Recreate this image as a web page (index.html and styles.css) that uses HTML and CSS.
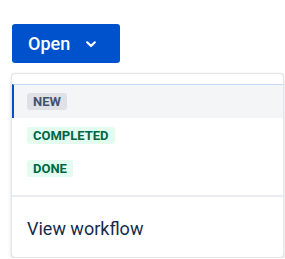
FILE: index.html
```
<!DOCTYPE html>
<html>
	<head>
		<meta charset="utf-8">
		<title>Status</title>
		<link rel="stylesheet" href="styles.css">
	</head>
	<body>
		<button class="status-btn" type="button">
			<span>Open</span>
			<svg class="chevron" width="10" height="7" viewBox="0 0 10 7">
				<path d="M1.2 1.3 L5 5 L8.8 1.3" fill="none" stroke="#fff" stroke-width="2.2" stroke-linecap="round" stroke-linejoin="round"/>
			</svg>
		</button>

		<div class="menu">
			<ul class="menu-list">
				<li class="menu-item selected"><span class="lozenge grey">New</span></li>
				<li class="menu-item"><span class="lozenge green">Completed</span></li>
				<li class="menu-item"><span class="lozenge green">Done</span></li>
			</ul>
			<div class="menu-footer">View workflow</div>
		</div>
	</body>
</html>
```

FILE: styles.css
```
*{
	margin: 0;
	padding: 0;
	list-style: none;
	box-sizing: border-box;
}
html,body{
	overflow: hidden;
}
body{
	font-family: Roboto, "Liberation Sans", sans-serif;
	color: #172b4d;
	background: #fff;
	padding: 24px 0 0 12px;
}
.status-btn{
	display: flex;
	align-items: center;
	height: 39px;
	width: 108px;
	padding: 0 0 0 16px;
	background: #0052cc;
	color: #fff;
	border: none;
	border-radius: 3px;
	font-family: Roboto, "Liberation Sans", sans-serif;
	font-size: 18px;
	font-weight: 500;
	gap: 16px;
}
.chevron{
	display: block;
	margin-top: 1px;
}
.menu{
	width: 273px;
	margin: 10px 0 0 -1px;
	border: 1px solid #e4e6ea;
	border-radius: 4px;
	box-shadow: 0 3px 6px -2px rgba(9,30,66,0.18), 0 0 1px rgba(9,30,66,0.2);
	background: #fff;
}
.menu-list{
	padding: 10px 0 11px;
	border-bottom: 2px solid #ebecf0;
}
.menu-item{
	display: flex;
	align-items: center;
	height: 33px;
	padding: 0 0 0 13px;
	border-top: 1px solid transparent;
	border-left: 2px solid transparent;
}
.menu-item.selected{
	background: #f4f5f7;
	border-left-color: #0052cc;
	border-top-color: #c5d8f5;
	height: 34px;
	padding-bottom: 1px;
}
.lozenge{
	display: inline-block;
	height: 17px;
	line-height: 17px;
	padding: 0 6px;
	border-radius: 3px;
	font-size: 13px;
	font-weight: 700;
	text-transform: uppercase;
}
.lozenge.grey{
	background: #dfe1e6;
	color: #42526e;
}
.lozenge.green{
	background: #e3fcef;
	color: #006644;
}
.menu-footer{
	padding: 20px 0 16px 15px;
	font-size: 18px;
	line-height: 24px;
	color: #172b4d;
}
```
